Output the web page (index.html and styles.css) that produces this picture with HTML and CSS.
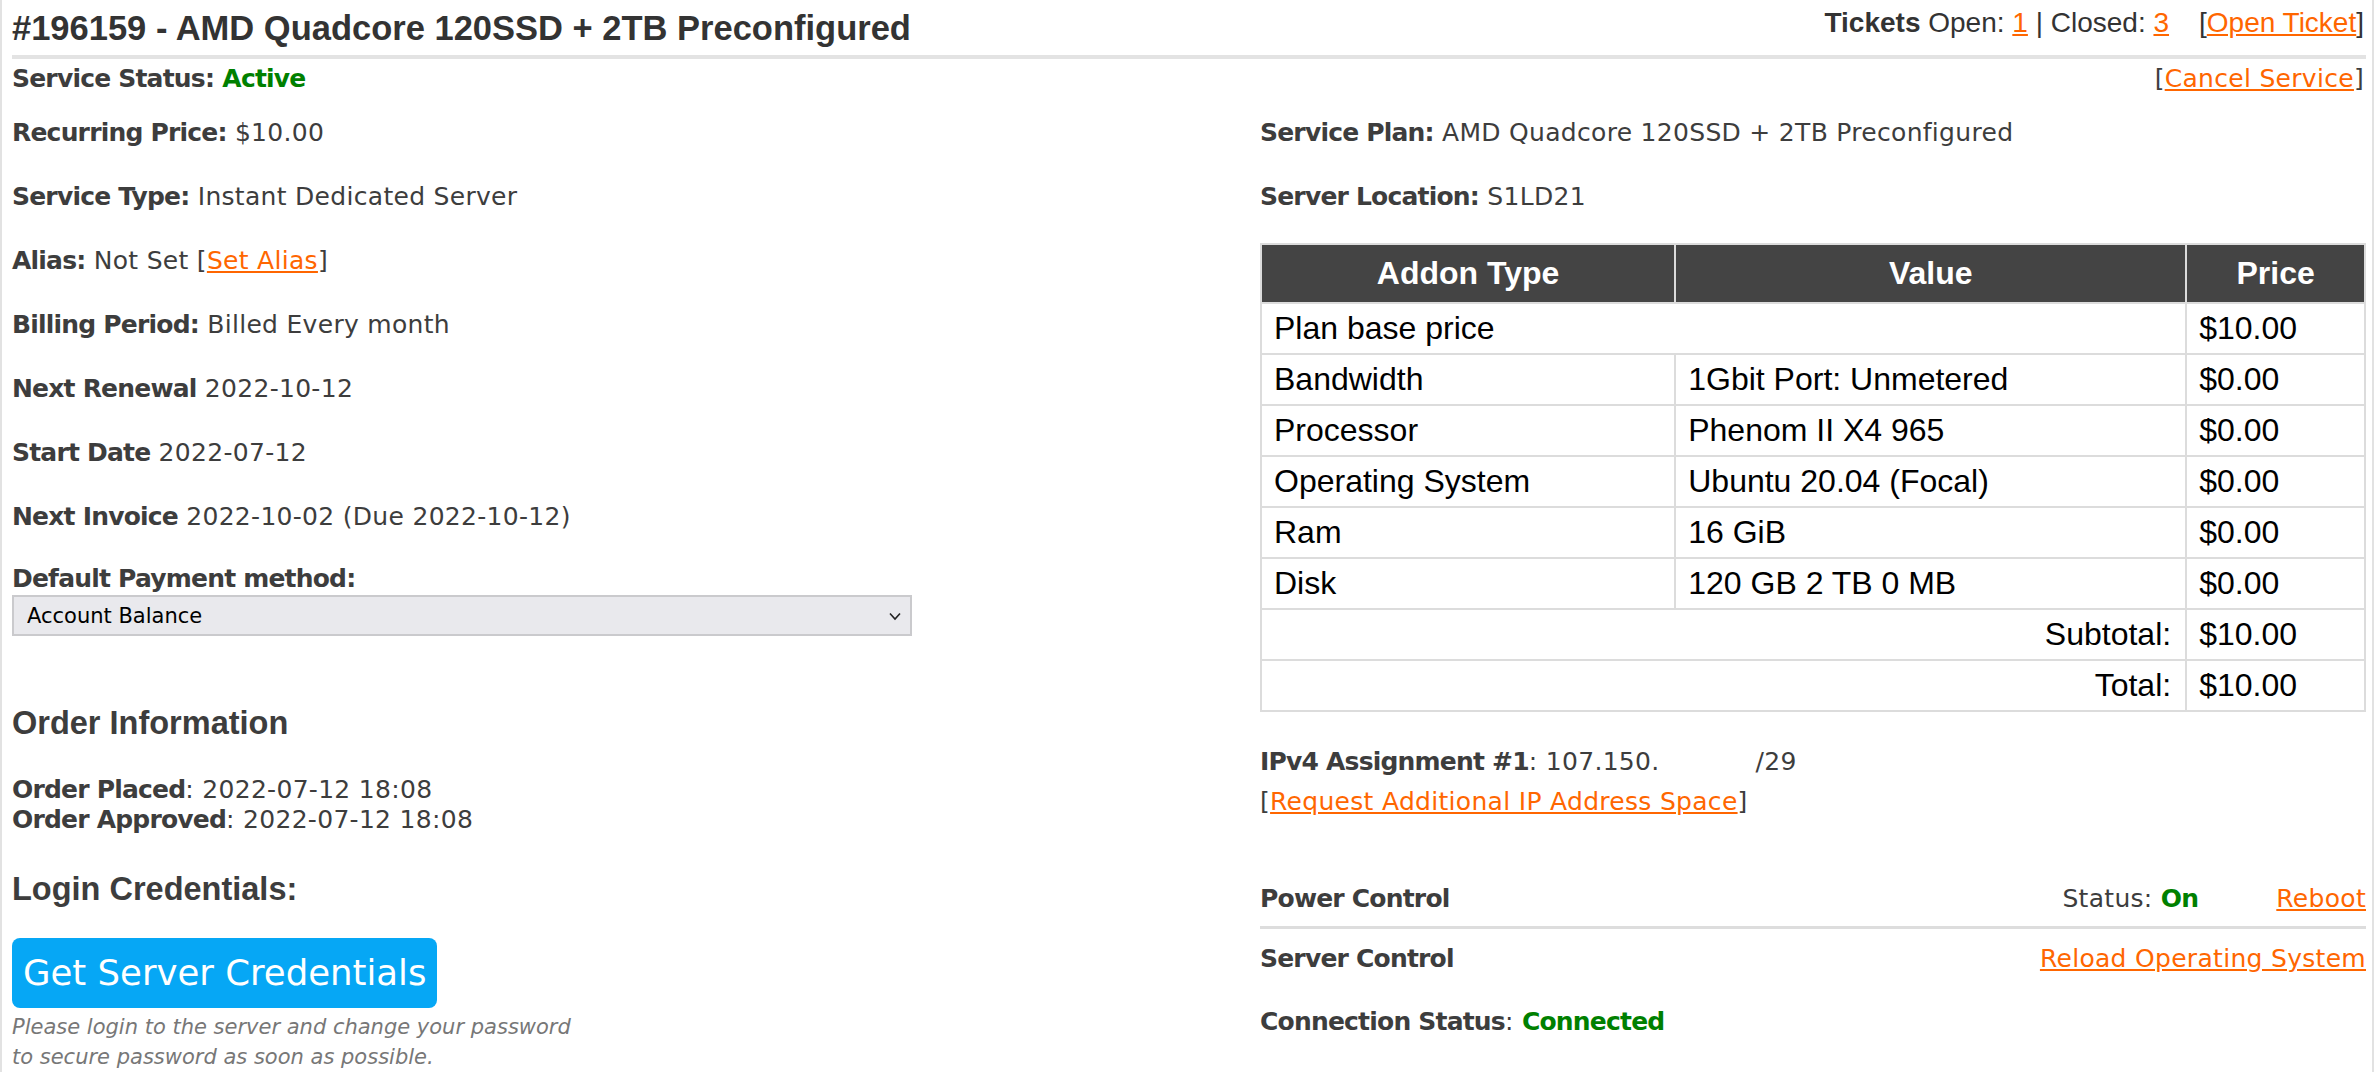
FILE: index.html
```html
<!DOCTYPE html>
<html lang="en">
<head>
    <meta charset="UTF-8">
    <title>#196159 - AMD Quadcore 120SSD + 2TB Preconfigured</title>
    <link rel="stylesheet" href="styles.css">
</head>
<body>
<div id="service">
    <div class="head">
        <h2 class="title">#196159 - AMD Quadcore 120SSD + 2TB Preconfigured</h2>
        <div class="tickets">
            <b>Tickets</b> Open: <a href="#">1</a> | Closed: <a href="#">3</a><span class="open">[<a href="#">Open Ticket</a>]</span>
        </div>
    </div>
    <div class="status">
        <span><b>Service Status:</b> <b class="green">Active</b></span>
        <span>[<a href="#">Cancel Service</a>]</span>
    </div>
    <div class="cols">
        <div class="left">
            <div class="row"><b>Recurring Price:</b> $10.00</div>
            <div class="row"><b>Service Type:</b> Instant Dedicated Server</div>
            <div class="row"><b>Alias:</b> Not Set [<a href="#">Set Alias</a>]</div>
            <div class="row"><b>Billing Period:</b> Billed Every month</div>
            <div class="row"><b>Next Renewal</b> 2022-10-12</div>
            <div class="row"><b>Start Date</b> 2022-07-12</div>
            <div class="row"><b>Next Invoice</b> 2022-10-02 (Due 2022-10-12)</div>
            <div class="row pay"><b>Default Payment method:</b></div>
            <div class="select-wrap">
                <select>
                    <option>Account Balance</option>
                </select>
                <svg class="chevron" width="14" height="14" viewBox="0 0 14 14"><polyline points="2,4.5 7,10 12,4.5" fill="none" stroke="#222" stroke-width="1.6"/></svg>
            </div>

            <h3>Order Information</h3>
            <div class="order">
                <b>Order Placed</b>: 2022-07-12 18:08<br>
                <b>Order Approved</b>: 2022-07-12 18:08
            </div>

            <h3 class="login">Login Credentials:</h3>
            <div class="button">Get Server Credentials</div>
            <p class="note">Please login to the server and change your password<br>to secure password as soon as possible.</p>
        </div>

        <div class="right">
            <div class="row"><b>Service Plan:</b> AMD Quadcore 120SSD + 2TB Preconfigured</div>
            <div class="row"><b>Server Location:</b> S1LD21</div>
            <table class="addons">
                <colgroup>
                    <col class="c-type">
                    <col class="c-value">
                    <col class="c-price">
                </colgroup>
                <tr><th>Addon Type</th><th>Value</th><th>Price</th></tr>
                <tr><td colspan="2">Plan base price</td><td>$10.00</td></tr>
                <tr><td>Bandwidth</td><td>1Gbit Port: Unmetered</td><td>$0.00</td></tr>
                <tr><td>Processor</td><td>Phenom II X4 965</td><td>$0.00</td></tr>
                <tr><td>Operating System</td><td>Ubuntu 20.04 (Focal)</td><td>$0.00</td></tr>
                <tr><td>Ram</td><td>16 GiB</td><td>$0.00</td></tr>
                <tr><td>Disk</td><td>120 GB 2 TB 0 MB</td><td>$0.00</td></tr>
                <tr><td colspan="2" class="sum">Subtotal:</td><td>$10.00</td></tr>
                <tr><td colspan="2" class="sum">Total:</td><td>$10.00</td></tr>
            </table>

            <div class="ip">
                <b>IPv4 Assignment #1</b>: 107.150.<span class="hidden"></span>/29<br>
                [<a href="#">Request Additional IP Address Space</a>]
            </div>

            <div class="control power">
                <b>Power Control</b>
                <span><span class="state">Status: <b class="green">On</b></span><a href="#">Reboot</a></span>
            </div>
            <div class="control server">
                <b>Server Control</b>
                <a href="#">Reload Operating System</a>
            </div>
            <div class="conn"><b>Connection Status</b>: <b class="green">Connected</b></div>
        </div>
    </div>
</div>
</body>
</html>
```

FILE: styles.css
```css
html, body {
    margin: 0;
    padding: 0;
}
body {
    font-family: "DejaVu Sans", Verdana, sans-serif;
    font-size: 25px;
    letter-spacing: 0.3px;
    color: #3d3d3d;
    background: #fff;
}
b {
    letter-spacing: -0.8px;
}
a {
    color: #f60;
}
.green {
    color: #008000;
}
#service {
    width: 2374px;
    box-sizing: border-box;
    border-left: 2px solid #e2e2e2;
    border-right: 2px solid #e2e2e2;
    padding: 0 6px 0 10px;
}

/* title bar */
.head {
    display: flex;
    justify-content: space-between;
    align-items: flex-start;
    height: 47px;
    padding-top: 8px;
    border-bottom: 4px solid #e3e3e3;
}
.title {
    margin: 0;
    font: bold 34.5px/40px "Liberation Sans", Arial, sans-serif;
    letter-spacing: 0;
    color: #333;
}
.tickets {
    font: 28px/32px "Liberation Sans", Arial, sans-serif;
    letter-spacing: 0;
    color: #333;
    margin-top: -1px;
    margin-right: 2px;
}
.tickets b {
    letter-spacing: 0;
}
.tickets .open {
    margin-left: 30px;
}
.status {
    display: flex;
    justify-content: space-between;
    line-height: 36px;
    margin-top: 2px;
    margin-right: 2px;
}

/* two columns */
.cols {
    display: grid;
    grid-template-columns: 1fr 1106px;
    column-gap: 60px;
    margin-top: 18px;
}
.row {
    line-height: 36px;
    margin-bottom: 28px;
}
.row.pay {
    line-height: 32px;
    margin-bottom: 0;
}
.select-wrap {
    position: relative;
    width: 900px;
    height: 41px;
}
.select-wrap select {
    -webkit-appearance: none;
    appearance: none;
    width: 900px;
    height: 41px;
    margin: 0;
    padding: 0 13px;
    border: 2px solid #cacacd;
    border-radius: 0;
    background: #e9e9ed;
    font-family: "DejaVu Sans", Verdana, sans-serif;
    font-size: 21px;
    color: #000;
}
.chevron {
    position: absolute;
    right: 10px;
    top: 14px;
}
h3 {
    margin: 68px 0 0;
    font: bold 32.5px/38px "Liberation Sans", Arial, sans-serif;
    letter-spacing: 0;
    color: #3d3d3d;
}
.order {
    margin-top: 33px;
    line-height: 30px;
}
h3.login {
    margin-top: 35px;
}
.button {
    width: max-content;
    margin-top: 30px;
    height: 70px;
    line-height: 70px;
    padding: 0 11px;
    border-radius: 8px;
    background: #06a7f5;
    color: #fff;
    font-size: 35.5px;
    letter-spacing: 0;
}
.note {
    margin: 4px 0 0;
    font-size: 21px;
    line-height: 30px;
    font-style: italic;
    letter-spacing: 0;
    color: #777;
}

/* addon table */
.addons {
    width: 1106px;
    border-collapse: collapse;
    font: 32px "Liberation Sans", Arial, sans-serif;
    letter-spacing: 0;
    color: #000;
}
.c-type { width: 415px; }
.c-value { width: 512px; }
.c-price { width: 179px; }
.addons th, .addons td {
    border: 2px solid #dcdcdc;
    line-height: 37px;
    text-align: left;
}
.addons th {
    background: #444;
    color: #fff;
    padding: 10px 12px;
    text-align: center;
}
.addons td {
    padding: 6px 12px;
}
.addons td.sum {
    text-align: right;
    padding-right: 14px;
}
.ip {
    margin-top: 30px;
    line-height: 40px;
}
.ip .hidden {
    display: inline-block;
    width: 96px;
}
.control {
    display: flex;
    justify-content: space-between;
    line-height: 36px;
}
.power {
    margin-top: 59px;
    padding-bottom: 9px;
    border-bottom: 3px solid #ddd;
}
.power .state {
    margin-right: 78px;
}
.server {
    padding-top: 12px;
}
.conn {
    margin-top: 27px;
    line-height: 36px;
}
```
